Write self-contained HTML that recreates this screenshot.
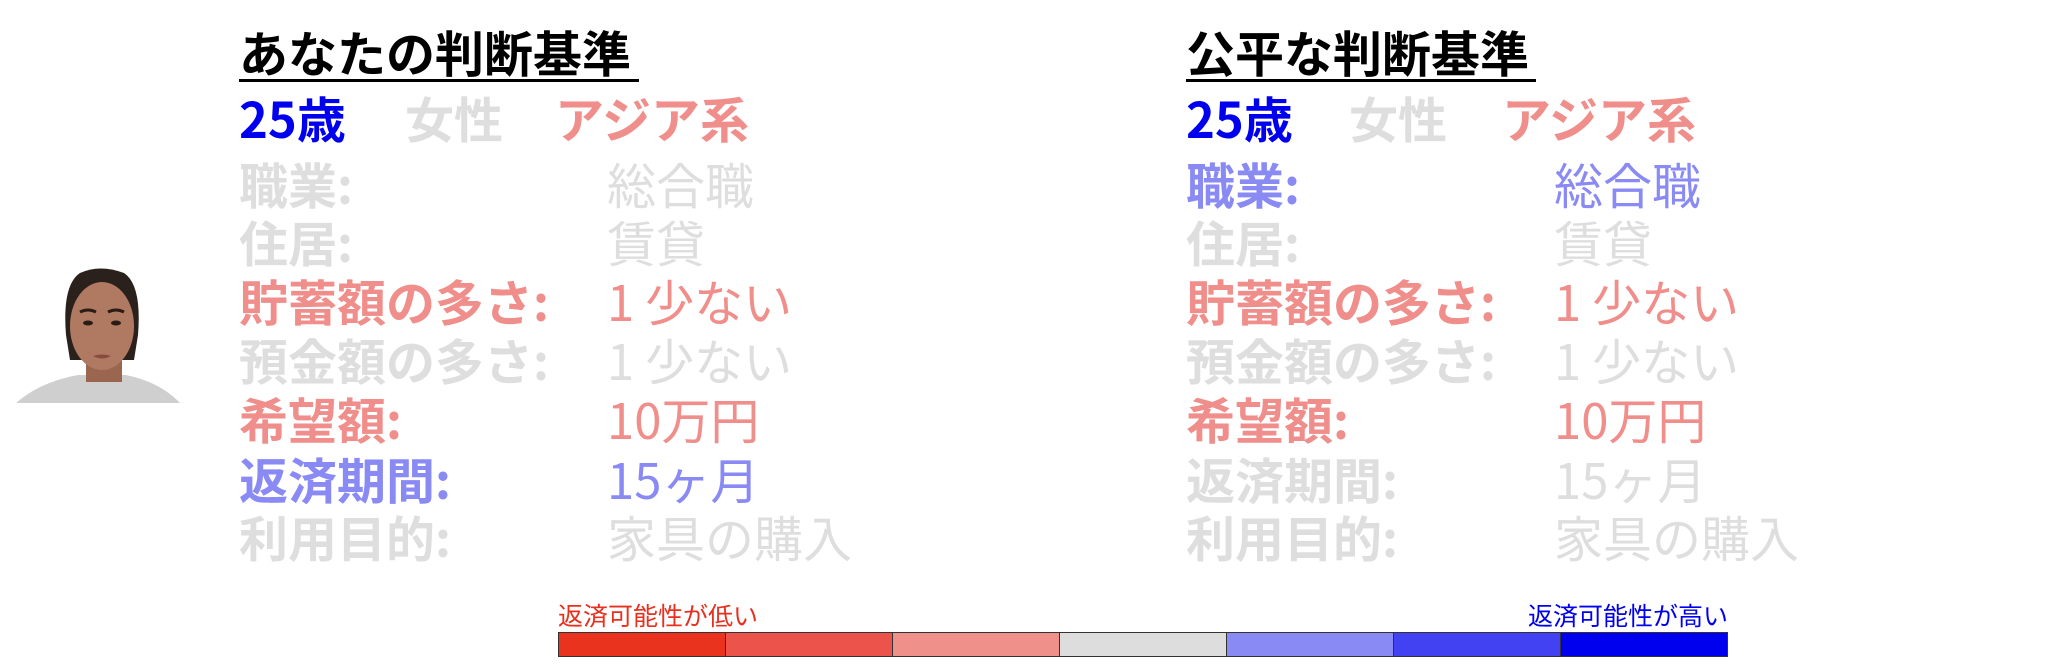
<!DOCTYPE html>
<html><head><meta charset="utf-8"><style>
body{margin:0;width:2048px;height:665px;background:#fff;position:relative;overflow:hidden;font-family:"Noto Sans CJK JP","Liberation Sans",sans-serif;}
.t{position:absolute;white-space:nowrap;line-height:60px;font-size:49px;}
.b{font-weight:bold;}
.title{position:absolute;font-weight:bold;font-size:49px;line-height:60px;color:#000;white-space:nowrap;}
.ul{position:absolute;height:3px;background:#000;}
.g{color:#dedede}.p{color:#ef8e8a}.lb{color:#8a8af4}.bl{color:#0000ee}
.seg{position:absolute;top:632px;height:25px;border:1px solid #333;box-sizing:border-box;}
</style></head><body>
<div class="title" style="left:239px;top:22px">あなたの判断基準</div>
<div class="ul" style="left:239px;top:79px;width:400px"></div>
<div class="title" style="left:1186px;top:22px">公平な判断基準</div>
<div class="ul" style="left:1186px;top:79px;width:350px"></div>

<div class="t b bl" style="left:239px;top:88px">25歳</div>
<div class="t b g" style="left:405px;top:88px">女性</div>
<div class="t b p" style="left:555px;top:88px">アジア系</div>
<div class="t b bl" style="left:1186px;top:88px">25歳</div>
<div class="t b g" style="left:1349px;top:88px">女性</div>
<div class="t b p" style="left:1502px;top:88px">アジア系</div>

<div class="t b g" style="left:239px;top:154px">職業:</div><div class="t g" style="left:607px;top:154px">総合職</div>
<div class="t b g" style="left:239px;top:212px">住居:</div><div class="t g" style="left:607px;top:212px">賃貸</div>
<div class="t b p" style="left:239px;top:271px">貯蓄額の多さ:</div><div class="t p" style="left:607px;top:271px">1 少ない</div>
<div class="t b g" style="left:239px;top:330px">預金額の多さ:</div><div class="t g" style="left:607px;top:330px">1 少ない</div>
<div class="t b p" style="left:239px;top:389px">希望額:</div><div class="t p" style="left:607px;top:389px">10万円</div>
<div class="t b lb" style="left:239px;top:449px">返済期間:</div><div class="t lb" style="left:607px;top:449px">15ヶ月</div>
<div class="t b g" style="left:239px;top:507px">利用目的:</div><div class="t g" style="left:607px;top:507px">家具の購入</div>

<div class="t b lb" style="left:1186px;top:154px">職業:</div><div class="t lb" style="left:1554px;top:154px">総合職</div>
<div class="t b g" style="left:1186px;top:212px">住居:</div><div class="t g" style="left:1554px;top:212px">賃貸</div>
<div class="t b p" style="left:1186px;top:271px">貯蓄額の多さ:</div><div class="t p" style="left:1554px;top:271px">1 少ない</div>
<div class="t b g" style="left:1186px;top:330px">預金額の多さ:</div><div class="t g" style="left:1554px;top:330px">1 少ない</div>
<div class="t b p" style="left:1186px;top:389px">希望額:</div><div class="t p" style="left:1554px;top:389px">10万円</div>
<div class="t b g" style="left:1186px;top:449px">返済期間:</div><div class="t g" style="left:1554px;top:449px">15ヶ月</div>
<div class="t b g" style="left:1186px;top:507px">利用目的:</div><div class="t g" style="left:1554px;top:507px">家具の購入</div>

<svg style="position:absolute;left:0;top:260px" width="200" height="150" viewBox="0 0 200 150">
<path d="M16 143 Q40 122 78 115 L126 115 Q160 122 180 143 Z" fill="#cfcfcf"/>
<path d="M66 75 Q62 25 80 13 Q100 4 124 13 Q142 25 138 75 L134 100 L70 100 Z" fill="#2a211c"/>
<rect x="86" y="100" width="36" height="22" fill="#9a6650"/>
<ellipse cx="102" cy="66" rx="32" ry="44" fill="#b07a62"/>
<path d="M80 52 Q88 48 96 52 M108 52 Q116 48 124 52" stroke="#2a1c15" stroke-width="3" fill="none"/>
<ellipse cx="88" cy="63" rx="5" ry="2.5" fill="#2a1c15"/><ellipse cx="116" cy="63" rx="5" ry="2.5" fill="#2a1c15"/>
<path d="M93 96 Q102 93 111 96 Q102 101 93 96Z" fill="#8a4a40"/>
</svg>

<div style="position:absolute;left:558px;top:600px;font-size:25px;color:#e8301e;line-height:30px;white-space:nowrap">返済可能性が低い</div>
<div style="position:absolute;right:320px;top:600px;font-size:25px;color:#0000ee;line-height:30px;white-space:nowrap">返済可能性が高い</div>
<div class="seg" style="left:558px;width:168px;background:#e9331f"></div>
<div class="seg" style="left:725px;width:168px;background:#eb534b"></div>
<div class="seg" style="left:892px;width:168px;background:#ef908b"></div>
<div class="seg" style="left:1059px;width:168px;background:#dddddd"></div>
<div class="seg" style="left:1226px;width:168px;background:#8a8af4"></div>
<div class="seg" style="left:1393px;width:168px;background:#4242f2"></div>
<div class="seg" style="left:1560px;width:168px;background:#0000ee"></div>
</body></html>
